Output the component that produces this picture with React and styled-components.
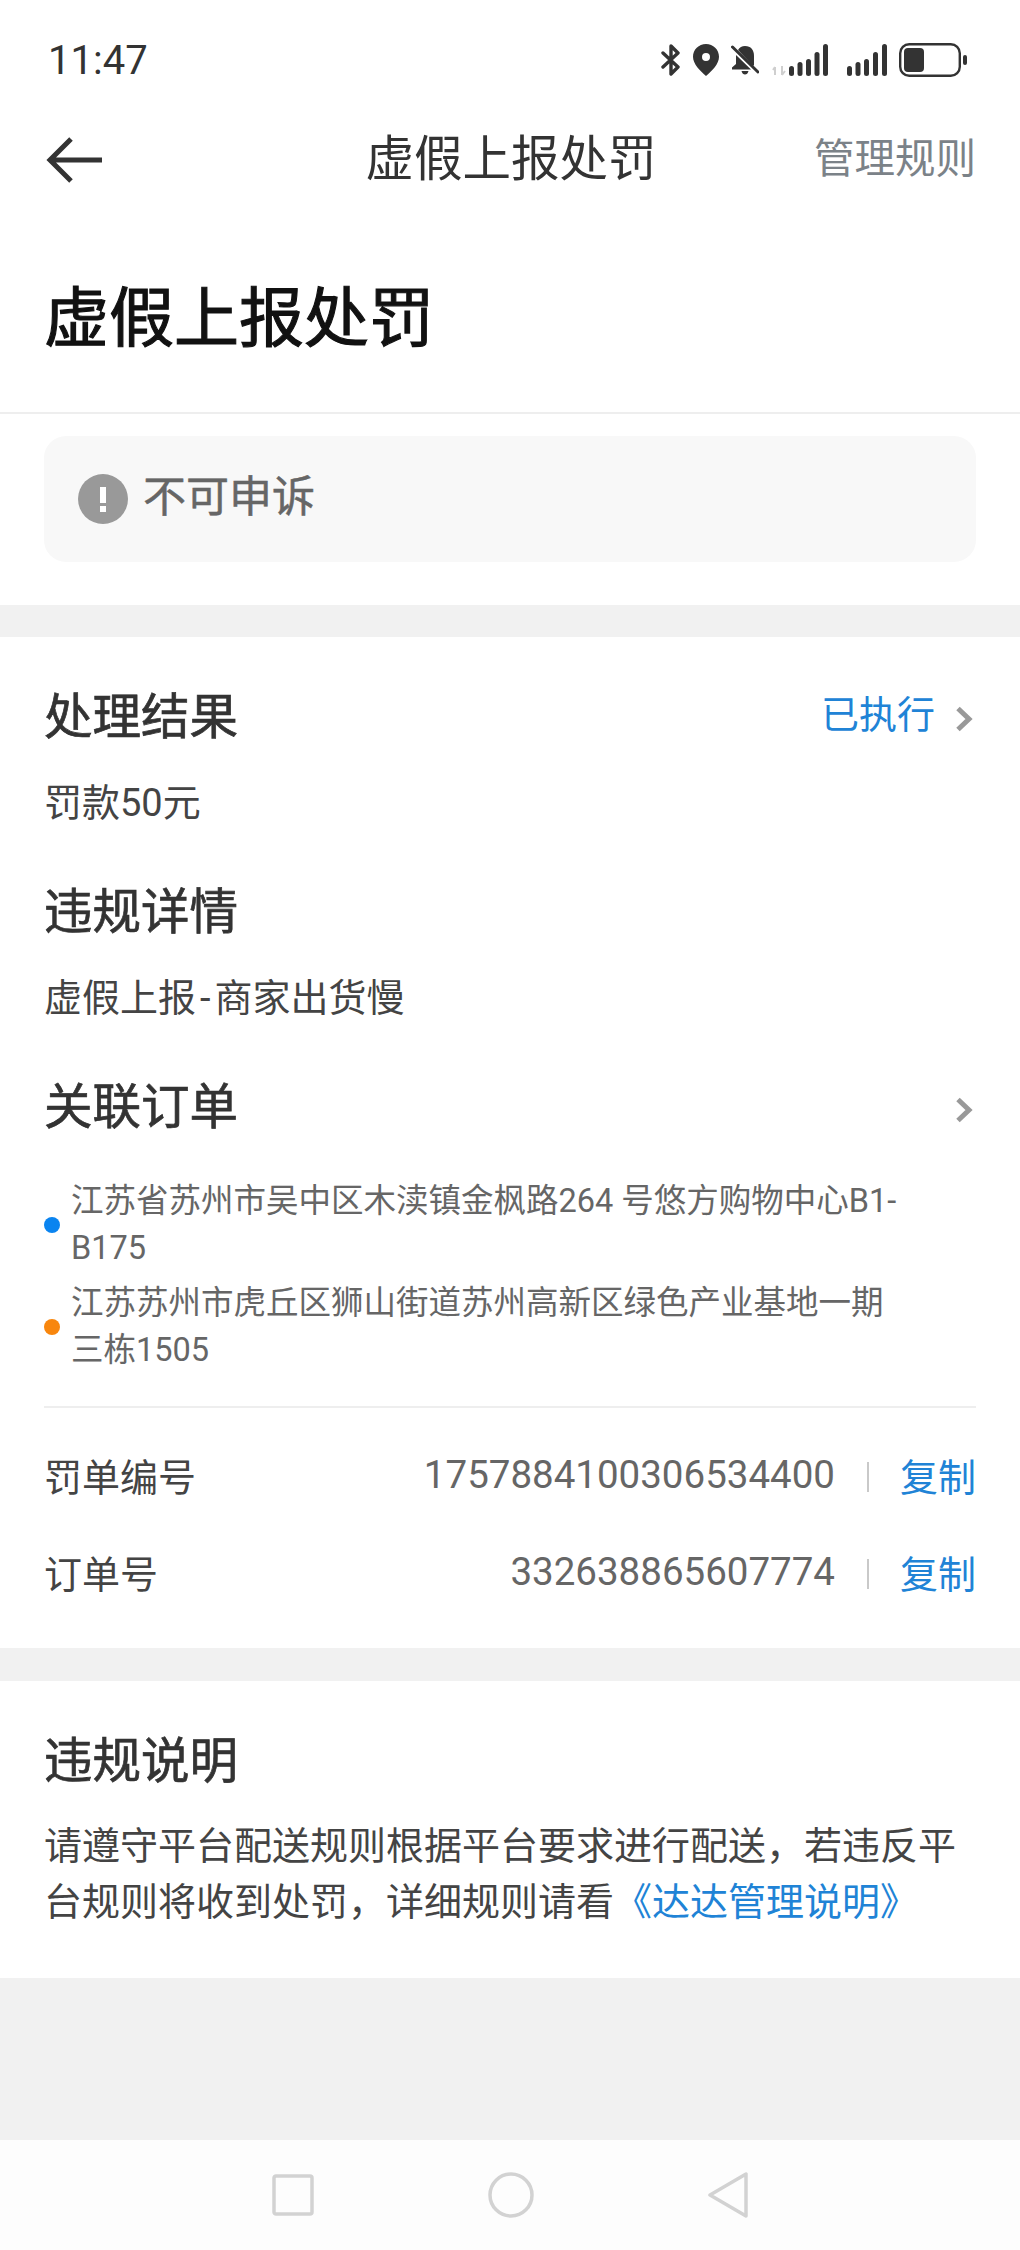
import React from 'react';
import styled, { createGlobalStyle } from 'styled-components';

const Global = createGlobalStyle`
	* { box-sizing: border-box; }
	body {
		margin: 0;
		background: #fff;
		font-family: Roboto, "Noto Sans CJK SC", sans-serif;
	}
`;

const Page = styled.div`
	width: 1020px;
	height: 2250px;
	display: flex;
	flex-direction: column;
	background: #f1f1f1;
	overflow: hidden;
`;

const Header = styled.header`
	background: #fff;
	border-bottom: 2px solid #eeeeee;
	padding-bottom: 48px;
`;

const StatusBar = styled.div`
	height: 120px;
	display: flex;
	align-items: center;
	justify-content: space-between;
	padding: 0 53px 0 48px;
`;

const Time = styled.span`
	font-size: 40px;
	color: #333;
`;

const StatusIcons = styled.div`
	display: flex;
	align-items: center;
	height: 34px;
`;

const StatusIcon = styled.svg`
	display: block;
	margin-left: ${(p) => p.$gap || 0}px;
`;

const NavBar = styled.div`
	height: 80px;
	display: grid;
	grid-template-columns: 1fr auto 1fr;
	align-items: center;
	padding: 0 44px 0 46px;
`;

const NavTitle = styled.div`
	font-size: 48.500px;
	line-height: 60px;
	color: #333;
`;

const NavAction = styled.div`
	justify-self: end;
	font-size: 40.500px;
	line-height: 54px;
	padding-bottom: 3px;
	color: #7b8288;
`;

const BigTitle = styled.h1`
	margin: 74px 0 0 44px;
	font-size: 65px;
	line-height: 90px;
	font-weight: 400;
	-webkit-text-stroke: 1.100px #111;
	color: #111;
`;

const Section = styled.section`
	background: #fff;
	padding: ${(p) => p.$top}px 44px ${(p) => p.$bottom}px;
	margin-bottom: ${(p) => p.$gap || 0}px;
`;

const NoticeCard = styled.div`
	height: 126px;
	display: flex;
	align-items: center;
	gap: 15px;
	padding-left: 34px;
	background: #f8f8f8;
	border-radius: 22px;
	font-size: 43px;
	-webkit-text-stroke: 0.500px #666;
	color: #666;
`;

const NoticeText = styled.span`
	line-height: 56px;
	padding-bottom: 4px;
`;

const HeadRow = styled.div`
	display: flex;
	align-items: center;
	justify-content: space-between;
	margin-top: ${(p) => p.$top || 0}px;
`;

const Heading = styled.h2`
	margin: 0;
	font-size: 48.500px;
	line-height: 56px;
	padding-top: 4px;
	font-weight: 400;
	-webkit-text-stroke: 0.700px #333;
	color: #333;
`;

const StatusLink = styled.div`
	display: flex;
	align-items: center;
	gap: 20px;
	font-size: 38px;
	line-height: 50px;
	padding-bottom: 3px;
	color: #2083d6;
`;

const ChevronIcon = styled.svg`
	display: block;
	margin: ${(p) => p.$top || 0}px 3px 0 0;
`;

const Body = styled.p`
	margin: ${(p) => p.$top}px 0 0;
	font-size: 38px;
	line-height: ${(p) => p.$line || 50}px;
	color: #444;
`;

const Dash = styled.span`
	margin: 0 4px;
`;

const Address = styled.div`
	position: relative;
	margin-top: ${(p) => p.$top}px;
	padding: 0 64px 0 27px;
	font-size: 32.500px;
	line-height: 46.500px;
	color: #666;
	&::before {
		content: '';
		position: absolute;
		left: 0;
		top: 50%;
		margin-top: -8px;
		width: 16px;
		height: 16px;
		border-radius: 50%;
		background: ${(p) => p.$dot};
	}
`;

const Rule = styled.div`
	height: 2px;
	margin-top: 33px;
	background: #eeeeee;
`;

const InfoRow = styled.div`
	height: 60px;
	display: flex;
	align-items: center;
	margin-top: ${(p) => p.$top}px;
	font-size: 38px;
	color: #444;
`;

const InfoValue = styled.span`
	margin-left: auto;
	font-size: 38.500px;
	color: #666;
`;

const Sep = styled.span`
	width: 2px;
	height: 30px;
	margin: 5px 31px 0 32px;
	background: #c9c9c9;
`;

const Copy = styled.span`
	color: #2083d6;
`;

const RuleLink = styled.span`
	color: #2083d6;
`;

const Filler = styled.div`
	flex: 1;
`;

const BottomNav = styled.nav`
	height: 110px;
	display: flex;
	align-items: center;
	justify-content: center;
	gap: 174px;
	background: #fdfdfd;
`;

const Chevron = ({ top }) => (
	<ChevronIcon $top={top} width="18" height="26" viewBox="0 0 18 26" fill="none">
		<path d="M3 2.500 L14 13 L3 23.500" stroke="#999" strokeWidth="5" />
	</ChevronIcon>
);

const App = () => {
	return (
		<Page>
			<Global />
			<Header>
				<StatusBar>
					<Time>11:47</Time>
					<StatusIcons>
						<StatusIcon width="20" height="32" viewBox="0 0 20 32" fill="none">
							<path d="M2 9 L17 23 L10 30 V2 L17 9 L2 23" stroke="#333" strokeWidth="3.400" strokeLinecap="round" strokeLinejoin="round" />
						</StatusIcon>
						<StatusIcon $gap={12} width="26" height="32" viewBox="0 0 26 32">
							<path fillRule="evenodd" fill="#333" d="M13 0 C5.800 0 0 5.600 0 12.800 C0 20 7 27 13 32 C19 27 26 20 26 12.800 C26 5.600 20.200 0 13 0 Z M13 9 A4 4 0 1 1 13 17 A4 4 0 1 1 13 9 Z" />
						</StatusIcon>
						<StatusIcon $gap={12} width="28" height="30" viewBox="0 0 28 30">
							<path fill="#333" d="M14 1 C20 1 23 5 23 11 V20 L22 21 L7 5 C8.500 2.500 11 1 14 1 Z M5 10 L20 24.500 H1 V22.500 L5 19 Z M10.500 26 H17.500 C17 28.500 15.500 29.500 14 29.500 C12.500 29.500 11 28.500 10.500 26 Z" />
							<path d="M1.500 2 L27 27" stroke="#333" strokeWidth="3" strokeLinecap="round" />
						</StatusIcon>
						<StatusIcon $gap={13} width="56" height="32" viewBox="0 0 56 32">
							<path d="M3 23 V31 M3 23 L1 26 M10 22 V31 M10 31 L13 27" stroke="#cfcfcf" strokeWidth="2" fill="none" />
							<rect x="17" y="22" width="5" height="10" rx="2.500" fill="#333" />
							<rect x="25.500" y="18" width="5" height="14" rx="2.500" fill="#333" />
							<rect x="34" y="15" width="5" height="17" rx="2.500" fill="#333" />
							<rect x="42.500" y="8" width="5" height="24" rx="2.500" fill="#333" />
							<rect x="51" y="0" width="5" height="32" rx="2.500" fill="#333" />
						</StatusIcon>
						<StatusIcon $gap={19} width="40" height="32" viewBox="0 0 40 32">
							<rect x="0" y="22" width="5" height="10" rx="2.500" fill="#333" />
							<rect x="8.500" y="18" width="5" height="14" rx="2.500" fill="#333" />
							<rect x="17" y="15" width="5" height="17" rx="2.500" fill="#333" />
							<rect x="26" y="8" width="5" height="24" rx="2.500" fill="#333" />
							<rect x="35" y="0" width="5" height="32" rx="2.500" fill="#333" />
						</StatusIcon>
						<StatusIcon $gap={12} width="68" height="34" viewBox="0 0 68 34">
							<rect x="1.200" y="1.200" width="59.600" height="31.600" rx="9" fill="none" stroke="#333" strokeWidth="2.400" />
							<rect x="5" y="5" width="20" height="24" rx="4" fill="#333" />
							<rect x="64" y="12" width="4" height="10" rx="2" fill="#333" />
						</StatusIcon>
					</StatusIcons>
				</StatusBar>
				<NavBar>
					<svg width="56" height="48" viewBox="0 0 56 48" fill="none">
						<path d="M25 3 L4 24 L25 45 M4 24 H56" stroke="#333" strokeWidth="5" />
					</svg>
					<NavTitle>虚假上报处罚</NavTitle>
					<NavAction>管理规则</NavAction>
				</NavBar>
				<BigTitle>虚假上报处罚</BigTitle>
			</Header>

			<Section $top={22} $bottom={43} $gap={32}>
				<NoticeCard>
					<svg width="50" height="50" viewBox="0 0 50 50">
						<circle cx="25" cy="25" r="25" fill="#999" />
						<rect x="22" y="13" width="6" height="16" fill="#fff" />
						<rect x="22" y="32" width="6" height="6" fill="#fff" />
					</svg>
					<NoticeText>不可申诉</NoticeText>
				</NoticeCard>
			</Section>

			<Section $top={49} $bottom={47} $gap={33}>
				<HeadRow>
					<Heading>处理结果</Heading>
					<StatusLink>已执行<Chevron top={8} /></StatusLink>
				</HeadRow>
				<Body $top={32}>罚款50元</Body>
				<HeadRow $top={53}>
					<Heading>违规详情</Heading>
				</HeadRow>
				<Body $top={32}>虚假上报<Dash>-</Dash>商家出货慢</Body>
				<HeadRow $top={53}>
					<Heading>关联订单</Heading>
					<Chevron top={8} />
				</HeadRow>
				<Address $top={42} $dot="#0a84f0">江苏省苏州市吴中区木渎镇金枫路264 号悠方购物中心B1-B175</Address>
				<Address $top={9} $dot="#f8860d">江苏苏州市虎丘区狮山街道苏州高新区绿色产业基地一期三栋1505</Address>
				<Rule />
				<InfoRow $top={36}>
					罚单编号
					<InfoValue>1757884100306534400</InfoValue>
					<Sep />
					<Copy>复制</Copy>
				</InfoRow>
				<InfoRow $top={37}>
					订单号
					<InfoValue>332638865607774</InfoValue>
					<Sep />
					<Copy>复制</Copy>
				</InfoRow>
			</Section>

			<Section $top={49} $bottom={48}>
				<Heading>违规说明</Heading>
				<Body $top={28} $line={56}>
					请遵守平台配送规则根据平台要求进行配送，若违反平台规则将收到处罚，详细规则请看<RuleLink>《达达管理说明》</RuleLink>
				</Body>
			</Section>

			<Filler />

			<BottomNav>
				<svg width="42" height="42" viewBox="0 0 42 42" fill="none">
					<rect x="2" y="2" width="38" height="38" rx="2" stroke="#d2d2d2" strokeWidth="3.500" />
				</svg>
				<svg width="46" height="46" viewBox="0 0 46 46" fill="none">
					<circle cx="23" cy="23" r="21" stroke="#d2d2d2" strokeWidth="3.500" />
				</svg>
				<svg width="40" height="46" viewBox="0 0 40 46" fill="none">
					<path d="M38 2 V44 L2 23 Z" stroke="#d2d2d2" strokeWidth="3.500" strokeLinejoin="round" />
				</svg>
			</BottomNav>
		</Page>
	);
};

export default App;
